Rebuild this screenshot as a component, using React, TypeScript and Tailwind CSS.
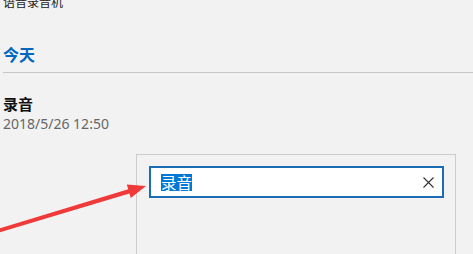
const cjk = "font-['Microsoft_YaHei','Noto_Sans_CJK_SC',sans-serif]";

function ClearIcon() {
  return (
    <svg width="11" height="11" viewBox="0 0 11 11" fill="none" aria-hidden>
      <path d="M0.5 0.5l10 10M10.5 0.5l-10 10" stroke="#333333" strokeWidth="1.1" />
    </svg>
  );
}

function RenameBox() {
  return (
    <div className="ml-[133px] mt-[20px] h-[120px] w-[320px] border border-[#cccccc] pl-[12px] pr-[11px] pt-[11px]">
      <div className="flex h-[32px] items-center justify-between border-2 border-[#1c6cb4] bg-white pl-[10px] pr-[8px]">
        <span
          className={`${cjk} bg-[#0078d7] text-[15.5px] leading-[17px] text-white`}
        >
          录音
        </span>
        <ClearIcon />
      </div>
    </div>
  );
}

function PointerArrow() {
  return (
    <svg
      className="pointer-events-none absolute left-0 top-0"
      width="473"
      height="254"
      viewBox="0 0 473 254"
      aria-hidden
    >
      <polygon
        points="-4,229.5 128.2,189.2 126.8,184.6 146,186 130.8,198 129.4,193.4 -4,233.5"
        fill="#f03a3a"
      />
    </svg>
  );
}

export default function App() {
  return (
    <div className="relative h-[254px] w-[473px] overflow-hidden bg-[#f2f2f2] pl-[3px]">
      <div className={`${cjk} mt-[-6px] text-[12px] leading-[16px] text-[#1a1a1a]`}>
        语音录音机
      </div>

      <div
        className={`${cjk} mt-[33px] text-[16px] font-bold leading-[22px] text-[#0067c0]`}
      >
        今天
      </div>
      <div className="mt-[7px] h-px bg-[#c6c6c6]" />

      <div
        className={`${cjk} mt-[21px] text-[15px] font-bold leading-[20px] text-[#111111]`}
      >
        录音
      </div>
      <div className="font-['Noto_Sans',sans-serif] text-[14px] leading-[20px] text-[#666666]">
        2018/5/26 12:50
      </div>

      <RenameBox />
      <PointerArrow />
    </div>
  );
}
